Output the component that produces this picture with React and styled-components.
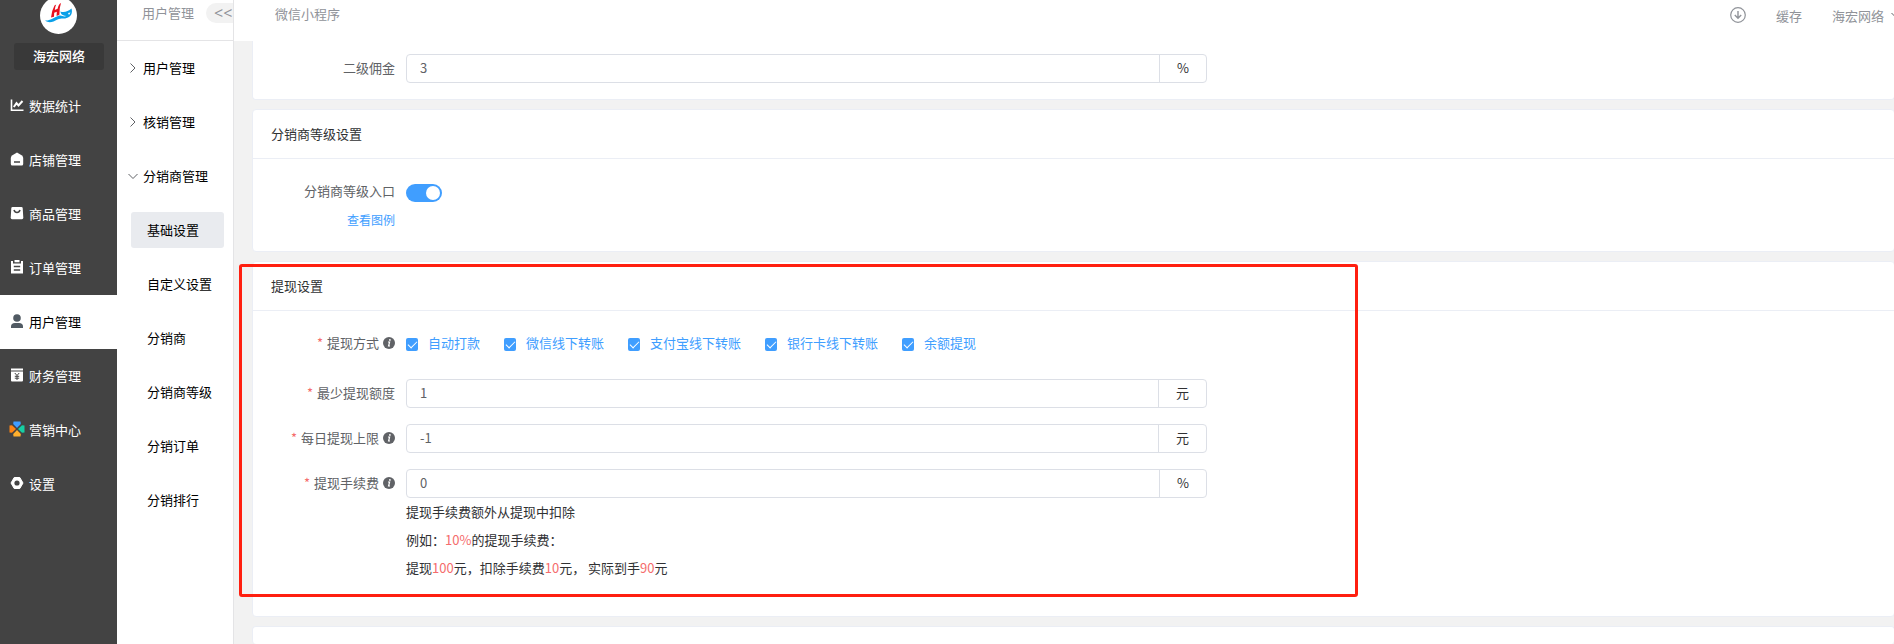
import { useState } from 'react'
import styled, { createGlobalStyle } from 'styled-components'

const GlobalStyle = createGlobalStyle`
  * {
    box-sizing: border-box;
  }
  body {
    margin: 0;
    overflow: hidden;
    color: #303133;
    font-size: 13px;
    font-family: 'Noto Sans CJK SC', 'Noto Sans', sans-serif;
  }
  button, input {
    font: inherit;
  }
  a {
    color: inherit;
    text-decoration: none;
  }
`

const Logo = () => (
  <svg width="37" height="37" viewBox="0 0 37 37">
    <circle cx="18.5" cy="18.5" r="18.5" fill="#fff" />
    <path d="M14.500 8.500 Q11.500 14 11 20.500 L14 19.800 L14.200 15.800 L16.800 14.800 L16.600 19 L19.400 17.800 Q19.200 11 21 6 Q18.500 7 17.600 11.800 L14.800 13 Q15 10 16.200 7.500 Z" fill="#e60f1e" />
    <path d="M5 23.500 C10 24 13 20.800 18 19 C22 17.500 23 20.500 26.500 19 C21 18.500 21 16 20.300 14.500 C24 16 28 14.500 31.500 11.500 C32.500 15 32 18.500 28 20.500 C24 22.500 21.500 20.500 17.500 22.500 C13 25 9 26.500 5 23.500 Z" fill="#0aa0e8" />
    <path d="M28 16 L30.500 15.500 L29 18 Z" fill="#fff" />
  </svg>
)

const ChartIcon = () => (
  <svg width="14" height="14" viewBox="0 0 14 14" fill="none" stroke="#fff">
    <path d="M1.500 1.500 V12.200 H13.500" strokeWidth="1.600" />
    <path d="M3.800 9 L6.500 5.200 L8.500 7.500 L12.500 3" strokeWidth="2" />
  </svg>
)

const ShopIcon = () => (
  <svg width="14" height="14" viewBox="0 0 14 14">
    <path d="M7 0.500 L12 3.500 Q13.200 4.500 13.200 6 V12 Q13.200 13.500 11.700 13.500 H2.300 Q0.800 13.500 0.800 12 V6 Q0.800 4.500 2 3.500 Z" fill="#fff" />
    <path d="M4 10 H10" stroke="#444" strokeWidth="1.500" />
  </svg>
)

const GoodsIcon = () => (
  <svg width="14" height="14" viewBox="0 0 14 14">
    <path d="M2.500 1 H11.500 Q12.500 1 12.700 2 L13.300 11.500 Q13.300 13.200 12 13.200 H2 Q0.700 13.200 0.700 11.500 L1.300 2 Q1.500 1 2.500 1 Z" fill="#fff" />
    <path d="M4 4 Q4.800 6.500 7 6.500 Q9.200 6.500 10 4" fill="none" stroke="#444" strokeWidth="1.600" />
  </svg>
)

const OrderIcon = () => (
  <svg width="14" height="14" viewBox="0 0 14 14">
    <path d="M1 1 H3 V3.500 H11 V1 H13 V13.500 H1 Z M4.500 0 H9.500 V2.300 H4.500 Z" fill="#fff" />
    <path d="M3.800 6.500 H10.200 M3.800 10 H10.200" stroke="#444" strokeWidth="1.400" />
  </svg>
)

const UserIcon = () => (
  <svg width="14" height="14" viewBox="0 0 14 14" fill="#515a63">
    <circle cx="7" cy="4" r="3.800" />
    <path d="M1 14 V12.500 Q1 9 5 9 H9 Q13 9 13 12.500 V14 Z" />
  </svg>
)

const FinanceIcon = () => (
  <svg width="14" height="14" viewBox="0 0 14 14">
    <path d="M1 0.500 H13 V2.500 H1 Z M1 3.500 H13 V12.500 Q13 13.500 12 13.500 H2 Q1 13.500 1 12.500 Z" fill="#fff" />
    <path d="M4.800 5 L7 7.500 L9.200 5 M7 7.500 V12 M4.800 8.300 H9.200 M4.800 10.200 H9.200" fill="none" stroke="#444" />
  </svg>
)

const MarketIcon = () => (
  <svg width="16" height="16" viewBox="0 0 16 16">
    <path d="M4.500 0.500 H11.500 L11.800 3 L8 7 L4.200 3 Z" fill="#409eff" />
    <path d="M15.500 4.500 V11.500 L13 11.800 L9 8 L13 4.200 Z" fill="#16cfa4" />
    <path d="M4.500 15.500 H11.500 L11.800 13 L8 9 L4.200 13 Z" fill="#ffb02e" />
    <path d="M0.500 4.500 V11.500 L3 11.800 L7 8 L3 4.200 Z" fill="#ff8412" />
  </svg>
)

const SettingIcon = () => (
  <svg width="14" height="14" viewBox="0 0 14 14">
    <path d="M4.200 1.500 H9.800 L13 7 L9.800 12.500 H4.200 L1 7 Z" fill="#fff" stroke="#fff" strokeLinejoin="round" />
    <circle cx="7" cy="7" r="2.600" fill="#444" />
  </svg>
)

const InfoIcon = () => (
  <svg width="12" height="12" viewBox="0 0 12 12">
    <circle cx="6" cy="6" r="6" fill="#606266" />
    <path d="M5 5 H6.600 L5.600 9 H7" fill="none" stroke="#fff" strokeWidth="1.200" />
    <circle cx="6.900" cy="2.900" r="0.900" fill="#fff" />
  </svg>
)

const Arrow = ({ open }) => (
  <svg width="12" height="12" viewBox="0 0 12 12" fill="none" stroke="#606266">
    <path d={open ? 'M1.500 4 L6 8.500 L10.500 4' : 'M3.500 1.500 L8 6 L3.500 10.500'} />
  </svg>
)

const DownloadIcon = () => (
  <svg width="16" height="16" viewBox="0 0 16 16" fill="none" stroke="#909399" strokeWidth="1.200">
    <circle cx="8" cy="8" r="7.300" />
    <path d="M8 4 V11 M4.800 8 L8 11.200 L11.200 8" strokeWidth="1.400" />
  </svg>
)

const mainMenu = [
  { name: '数据统计', Icon: ChartIcon },
  { name: '店铺管理', Icon: ShopIcon },
  { name: '商品管理', Icon: GoodsIcon },
  { name: '订单管理', Icon: OrderIcon },
  { name: '用户管理', Icon: UserIcon, active: true },
  { name: '财务管理', Icon: FinanceIcon },
  { name: '营销中心', Icon: MarketIcon },
  { name: '设置', Icon: SettingIcon },
]

const groups = [
  { name: '用户管理' },
  { name: '核销管理' },
  { name: '分销商管理', open: true },
]

const subMenu = ['基础设置', '自定义设置', '分销商', '分销商等级', '分销订单', '分销排行']

const payTypes = ['自动打款', '微信线下转账', '支付宝线下转账', '银行卡线下转账', '余额提现']

function NumberField({ id, label, unit, value, required, info, children }) {
  const [val, setVal] = useState(value)
  return (
    <FormItem>
      <Label htmlFor={id}>
        {required && <Star>*</Star>}
        {label}
        {info && <InfoIcon />}
      </Label>
      <Control>
        <InputGroup>
          <Input id={id} value={val} onChange={(e) => setVal(e.target.value)} />
          <Append>{unit}</Append>
        </InputGroup>
        {children}
      </Control>
    </FormItem>
  )
}

function App() {
  const [level, setLevel] = useState(true)
  const [checked, setChecked] = useState(payTypes)

  const toggle = (name) => {
    setChecked(checked.includes(name) ? checked.filter((c) => c !== name) : [...checked, name])
  }

  return (
    <Layout>
      <GlobalStyle />
      <Sidebar>
        <LogoBox><Logo /></LogoBox>
        <ShopName>海宏网络</ShopName>
        <nav>
          {mainMenu.map(({ name, Icon, active }) => (
            <NavItem key={name} href="#" $active={active}>
              <NavIcon><Icon /></NavIcon>
              <span>{name}</span>
            </NavItem>
          ))}
        </nav>
      </Sidebar>

      <SubPanel>
        <SubHeader>
          <span>用户管理</span>
          <Collapse type="button">&lt;&lt;</Collapse>
        </SubHeader>
        {groups.map((g) => (
          <Group key={g.name} type="button">
            <Arrow open={g.open} />
            <GroupName>{g.name}</GroupName>
          </Group>
        ))}
        {subMenu.map((name, i) => (
          <SubItem key={name} href="#" $active={i === 0}>{name}</SubItem>
        ))}
      </SubPanel>

      <Main>
        <TopBar>
          <span>微信小程序</span>
          <Tools>
            <ToolButton type="button" aria-label="下载"><DownloadIcon /></ToolButton>
            <ToolButton type="button">缓存</ToolButton>
            <ToolButton type="button">海宏网络<Arrow open /></ToolButton>
          </Tools>
        </TopBar>

        <Content>
          <Card $continued>
            <CardBody $continued>
              <NumberField id="second" label="二级佣金" unit="%" value="3" />
            </CardBody>
          </Card>

          <Card>
            <CardHeader>分销商等级设置</CardHeader>
            <CardBody>
              <FormItem>
                <LabelColumn>
                  <Label htmlFor="level">分销商等级入口</Label>
                  <Example href="#">查看图例</Example>
                </LabelColumn>
                <Control>
                  <Switch id="level" type="checkbox" checked={level} onChange={() => setLevel(!level)} />
                </Control>
              </FormItem>
            </CardBody>
          </Card>

          <Card>
            <CardHeader>提现设置</CardHeader>
            <CardBody>
              <FormItem>
                <Label as="span"><Star>*</Star>提现方式<InfoIcon /></Label>
                <CheckGroup>
                  {payTypes.map((name) => (
                    <CheckLabel key={name}>
                      <Checkbox type="checkbox" checked={checked.includes(name)} onChange={() => toggle(name)} />
                      {name}
                    </CheckLabel>
                  ))}
                </CheckGroup>
              </FormItem>
              <NumberField id="min" label="最少提现额度" unit="元" value="1" required />
              <NumberField id="limit" label="每日提现上限" unit="元" value="-1" required info />
              <NumberField id="fee" label="提现手续费" unit="%" value="0" required info>
                <Help>
                  <p>提现手续费额外从提现中扣除</p>
                  <p>例如：<Red>10%</Red>的提现手续费：</p>
                  <p>提现<Red>100</Red>元，扣除手续费<Red>10</Red>元， 实际到手<Red>90</Red>元</p>
                </Help>
              </NumberField>
            </CardBody>
            <Highlight />
          </Card>

          <Card $fill />
        </Content>
      </Main>
    </Layout>
  )
}

const Layout = styled.div`
  display: flex;
  height: 100vh;
  overflow: hidden;
`

const Sidebar = styled.aside`
  flex: 0 0 117px;
  background: #434343;
  color: #fff;
`

const LogoBox = styled.div`
  display: flex;
  justify-content: center;
  align-items: flex-end;
  height: 34px;
`

const ShopName = styled.div`
  margin: 9px 13px 9px 14px;
  padding-bottom: 2px;
  line-height: 25px;
  border-radius: 3px;
  background: #393939;
  text-align: center;
  font-weight: 500;
`

const NavItem = styled.a`
  display: flex;
  align-items: center;
  gap: 4px;
  height: 54px;
  padding: 0 0 2px 9px;
  background: ${(p) => (p.$active ? '#fff' : 'transparent')};
  color: ${(p) => (p.$active ? '#000' : '#fff')};
`

const NavIcon = styled.span`
  display: flex;
  justify-content: center;
  width: 16px;
`

const SubPanel = styled.aside`
  flex: 0 0 117px;
  overflow: hidden;
  border-right: 1px solid #e4e4e6;
  background: #fff;
  color: #000;
`

const SubHeader = styled.div`
  display: flex;
  align-items: center;
  gap: 12px;
  height: 41px;
  padding: 0 0 15px 25px;
  border-bottom: 1px solid #e4e4e6;
  color: #909399;
  white-space: nowrap;
`

const Collapse = styled.button`
  flex: 0 0 36px;
  height: 20px;
  padding: 0 0 0 8px;
  border: 0;
  border-radius: 10px;
  background: #f2f2f2;
  color: #909399;
  font-family: 'Open Sans', sans-serif;
  font-size: 16px;
  line-height: 20px;
  text-align: left;
`

const Group = styled.button`
  display: flex;
  align-items: center;
  gap: 4px;
  width: 100%;
  height: 54px;
  padding: 0 0 0 10px;
  border: 0;
  background: none;
  color: #000;
`

const GroupName = styled.span`
  padding-bottom: 2px;
`

const SubItem = styled.a`
  display: block;
  height: 36px;
  margin: 9px 9px 18px 14px;
  padding-left: 16px;
  border-radius: 3px;
  background: ${(p) => (p.$active ? '#e9ebef' : 'transparent')};
  line-height: 36px;
  white-space: nowrap;
`

const Main = styled.main`
  display: flex;
  flex: 1;
  flex-direction: column;
  min-width: 0;
  background: #f2f2f2;
`

const TopBar = styled.header`
  display: flex;
  align-items: center;
  justify-content: space-between;
  height: 41px;
  padding: 0 0 15px 41px;
  background: #fff;
  color: #909399;
`

const Tools = styled.div`
  display: flex;
  align-items: center;
  gap: 30px;
  margin-right: -8px;
  padding-top: 4px;
`

const ToolButton = styled.button`
  display: flex;
  align-items: center;
  gap: 6px;
  padding: 0;
  border: 0;
  background: none;
  color: #909399;
`

const Content = styled.div`
  display: flex;
  flex: 1;
  flex-direction: column;
  gap: 9px;
  margin-right: -1px;
  padding-left: 18px;
`

const Card = styled.section`
  position: relative;
  flex: ${(p) => (p.$fill ? '1' : 'none')};
  border: 1px solid #ebeef5;
  border-top-width: ${(p) => (p.$continued ? '0' : '1px')};
  border-bottom-width: ${(p) => (p.$fill ? '0' : '1px')};
  border-radius: ${(p) => (p.$continued ? '0 0 4px 4px' : '4px')};
  background: #fff;
`

const CardHeader = styled.div`
  height: 49px;
  padding: 0 18px;
  border-bottom: 1px solid #ebeef5;
  line-height: 48px;
`

const CardBody = styled.div`
  padding: ${(p) => (p.$continued ? '13px' : '18px')} 21px 0 18px;
`

const FormItem = styled.div`
  display: flex;
  margin-bottom: 16px;
`

const Label = styled.label`
  display: flex;
  flex: 0 0 135px;
  align-items: center;
  justify-content: flex-end;
  gap: 4px;
  height: 29px;
  padding: 0 11px 2px 0;
  color: #606266;
  white-space: nowrap;
`

const LabelColumn = styled.div`
  flex: 0 0 135px;
`

const Example = styled.a`
  display: block;
  padding: 0 11px 2px 0;
  color: #409eff;
  font-size: 12px;
  line-height: 27px;
  text-align: right;
`

const Star = styled.span`
  color: #f56c6c;
`

const Control = styled.div`
  width: 50%;
`

const InputGroup = styled.div`
  display: flex;
  height: 29px;
  border: 1px solid #dcdfe6;
  border-radius: 4px;
`

const Input = styled.input`
  flex: 1;
  min-width: 0;
  padding: 0 13px 2px;
  border: 0;
  border-radius: 4px;
  outline: none;
  background: none;
  color: #606266;
`

const Append = styled.span`
  padding: 0 17px 2px;
  border-left: 1px solid #dcdfe6;
  line-height: 25px;
`

const Switch = styled.input`
  appearance: none;
  display: block;
  width: 36px;
  height: 18px;
  margin: 7px 0 0;
  padding: 2px;
  border-radius: 9px;
  background: ${(p) => (p.checked ? '#409eff' : '#dcdfe6')};

  &::before {
    content: '';
    display: block;
    width: 14px;
    height: 14px;
    margin-left: ${(p) => (p.checked ? 'auto' : '0')};
    border-radius: 50%;
    background: #fff;
  }
`

const CheckGroup = styled.div`
  display: flex;
  gap: 24px;
  height: 34px;
`

const CheckLabel = styled.label`
  display: flex;
  align-items: center;
  gap: 10px;
  height: 29px;
  padding-bottom: 2px;
  color: #409eff;
  white-space: nowrap;
`

const Checkbox = styled.input`
  appearance: none;
  display: flex;
  justify-content: center;
  width: 12px;
  height: 13px;
  margin: 4px 0 0;
  border-radius: 2px;
  background: ${(p) => (p.checked ? '#409eff' : '#dcdfe6')};

  &::after {
    content: '';
    width: 4px;
    height: 8px;
    margin-top: 1px;
    border: solid #fff;
    border-width: 0 1px 1px 0;
    transform: rotate(45deg);
  }
`

const Help = styled.div`
  margin-bottom: 18px;
  line-height: 28px;

  p {
    margin: 0;
  }
`

const Red = styled.span`
  color: #f56c6c;
`

/* marks the withdraw section, lies over the card and its left gutter */
const Highlight = styled.div`
  position: absolute;
  top: 2px;
  bottom: 19px;
  left: -14px;
  width: calc(50% + 298px);
  border: 3px solid #ff1f10;
  border-radius: 3px;
  pointer-events: none;
`

export default App
